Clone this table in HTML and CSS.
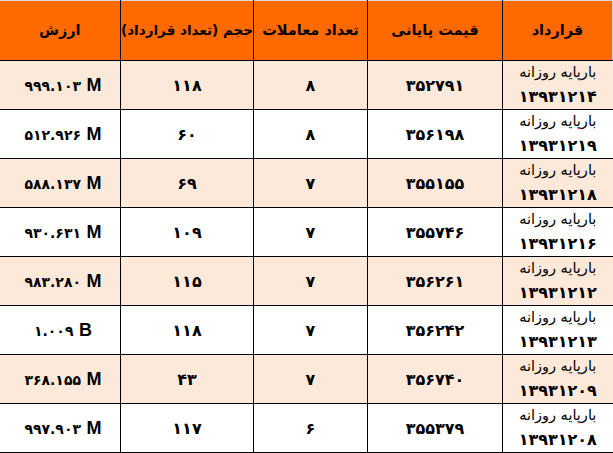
FILE: index.html
```html
<!DOCTYPE html>
<html lang="fa" dir="rtl">
<head>
<meta charset="utf-8">
<title>قراردادها</title>
<link rel="stylesheet" href="styles.css">
</head>
<body>
<table class="grid">
  <colgroup>
    <col class="c-contract"><col class="c-price"><col class="c-count"><col class="c-vol"><col class="c-value">
  </colgroup>
  <thead>
    <tr>
      <th>قرارداد</th>
      <th>قیمت پایانی</th>
      <th>تعداد معاملات</th>
      <th class="narrow">حجم (تعداد قرارداد)</th>
      <th>ارزش</th>
    </tr>
  </thead>
  <tbody>
    <tr class="alt">
      <td class="contract"><span class="name">بارپایه روزانه</span><span class="date">۱۳۹۳۱۲۱۴</span></td>
      <td>۳۵۲۷۹۱</td><td>۸</td><td>۱۱۸</td>
      <td class="value"><span class="num">۹۹۹.۱۰۳</span> <span class="unit">M</span></td>
    </tr>
    <tr>
      <td class="contract"><span class="name">بارپایه روزانه</span><span class="date">۱۳۹۳۱۲۱۹</span></td>
      <td>۳۵۶۱۹۸</td><td>۸</td><td>۶۰</td>
      <td class="value"><span class="num">۵۱۲.۹۲۶</span> <span class="unit">M</span></td>
    </tr>
    <tr class="alt">
      <td class="contract"><span class="name">بارپایه روزانه</span><span class="date">۱۳۹۳۱۲۱۸</span></td>
      <td>۳۵۵۱۵۵</td><td>۷</td><td>۶۹</td>
      <td class="value"><span class="num">۵۸۸.۱۳۷</span> <span class="unit">M</span></td>
    </tr>
    <tr>
      <td class="contract"><span class="name">بارپایه روزانه</span><span class="date">۱۳۹۳۱۲۱۶</span></td>
      <td>۳۵۵۷۴۶</td><td>۷</td><td>۱۰۹</td>
      <td class="value"><span class="num">۹۳۰.۶۳۱</span> <span class="unit">M</span></td>
    </tr>
    <tr class="alt">
      <td class="contract"><span class="name">بارپایه روزانه</span><span class="date">۱۳۹۳۱۲۱۲</span></td>
      <td>۳۵۶۲۶۱</td><td>۷</td><td>۱۱۵</td>
      <td class="value"><span class="num">۹۸۳.۲۸۰</span> <span class="unit">M</span></td>
    </tr>
    <tr>
      <td class="contract"><span class="name">بارپایه روزانه</span><span class="date">۱۳۹۳۱۲۱۳</span></td>
      <td>۳۵۶۲۴۲</td><td>۷</td><td>۱۱۸</td>
      <td class="value"><span class="num">۱.۰۰۹</span> <span class="unit">B</span></td>
    </tr>
    <tr class="alt">
      <td class="contract"><span class="name">بارپایه روزانه</span><span class="date">۱۳۹۳۱۲۰۹</span></td>
      <td>۳۵۶۷۴۰</td><td>۷</td><td>۴۳</td>
      <td class="value"><span class="num">۳۶۸.۱۵۵</span> <span class="unit">M</span></td>
    </tr>
    <tr>
      <td class="contract"><span class="name">بارپایه روزانه</span><span class="date">۱۳۹۳۱۲۰۸</span></td>
      <td>۳۵۵۳۷۹</td><td>۶</td><td>۱۱۷</td>
      <td class="value"><span class="num">۹۹۷.۹۰۳</span> <span class="unit">M</span></td>
    </tr>
  </tbody>
</table>
</body>
</html>
```

FILE: styles.css
```css
html, body {
  margin: 0;
  padding: 0;
  background: #ffffff;
}
body {
  font-family: "DejaVu Sans", sans-serif;
  color: #000;
}
.grid {
  border-collapse: collapse;
  table-layout: fixed;
  width: 613px;
}
.c-contract { width: 110px; }
.c-price { width: 135px; }
.c-count { width: 114px; }
.c-vol { width: 133px; }
.c-value { width: 121px; }

.grid th {
  background: #ff6a00;
  height: 57px;
  padding: 0 0 2px 0;
  font-size: 14.5px;
  font-weight: bold;
  text-align: center;
  white-space: nowrap;
  border: 1px solid #000;
  border-top: 1px solid #d8d8d8;
}
.grid th.narrow { font-size: 13.5px; }
.grid th:first-child { border-right: 1px solid #cfcfcf; }
.grid th:last-child { border-left: none; }

.grid td {
  height: 48px;
  padding: 0;
  text-align: center;
  font-size: 16px;
  letter-spacing: 1px;
  font-weight: bold;
  border: 1px solid #000;
  vertical-align: middle;
  overflow: hidden;
}
.grid td:first-child { border-right: none; }
.grid tbody tr.alt td { background: #fde9d9; }

.grid td.contract {
  vertical-align: top;
  letter-spacing: 0;
}
.contract .name {
  display: block;
  height: 22px;
  line-height: 22px;
  font-weight: normal;
  font-size: 14.5px;
  white-space: nowrap;
}
.contract .date {
  display: block;
  height: 26px;
  line-height: 28px;
  font-weight: bold;
  font-size: 16px;
  letter-spacing: 1.5px;
}
.grid td.value {
  direction: ltr;
  letter-spacing: 0;
  padding-left: 6px;
}
.value .num {
  font-size: 14px;
}
.value .unit {
  font-family: "Liberation Sans", Arial, sans-serif;
  font-size: 18px;
  font-weight: bold;
}
```
